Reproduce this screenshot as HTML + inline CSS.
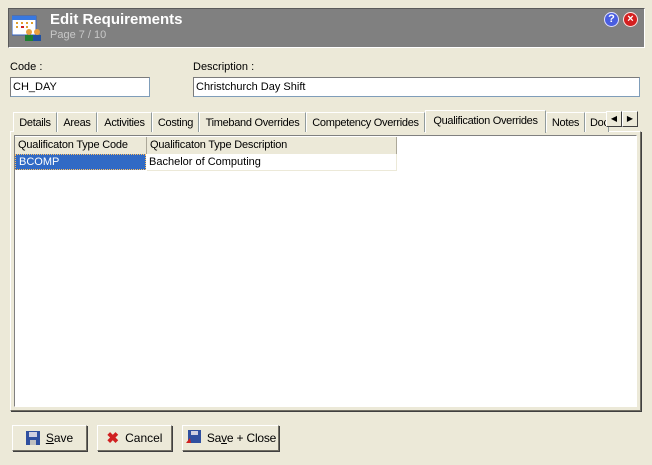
<!DOCTYPE html>
<html><head><meta charset="utf-8"><style>
*{box-sizing:border-box;margin:0;padding:0}
body{width:652px;height:465px;background:#ECE9D8;font-family:"Liberation Sans",Tahoma,sans-serif;font-size:11px;color:#000;position:relative;overflow:hidden}
.a{position:absolute}
.hdr{left:8px;top:8px;width:637px;height:40px;background:#808080;border-top:1px solid #5a5a5a;border-left:1px solid #5a5a5a;border-bottom:1px solid #fff;border-right:1px solid #fff}
.inp{background:#fff;border:1px solid #7f9db9;border-top-color:#7a7a7a;border-left-color:#7a7a7a;height:20px;padding:3px 2px;font-size:11px}
.tab{position:absolute;top:112px;height:20px;border:1px solid #fff;border-right:1px solid #919b9c;border-bottom:none;padding:4px 0 0;text-align:center;background:#ECE9D8;letter-spacing:-0.3px;white-space:nowrap;overflow:hidden}
.btn{position:absolute;top:425px;height:26px;border:1px solid #fff;border-right-color:#716f64;border-bottom-color:#716f64;box-shadow:1px 1px 0 #404040;display:flex;align-items:center;justify-content:center;gap:6px;font-size:12px}
</style></head><body>
<div class="a hdr"></div>
<svg class="a" style="left:12px;top:14px" width="30" height="28" viewBox="0 0 30 28">
<rect x="0" y="2" width="24" height="19" fill="#fff" stroke="#3060c0"/><rect x="0" y="2" width="24" height="4" fill="#3878e0"/>
<g fill="#e0a030"><rect x="4" y="8" width="2" height="2"/><rect x="9" y="8" width="2" height="2"/><rect x="14" y="8" width="2" height="2"/><rect x="19" y="8" width="2" height="2"/><rect x="4" y="12" width="2" height="2"/><rect x="14" y="12" width="2" height="2"/></g>
<rect x="9" y="12" width="3" height="2" fill="#d02020"/>
<circle cx="17" cy="18" r="3" fill="#e8a040"/><rect x="13" y="21" width="8" height="6" fill="#208030"/>
<circle cx="25" cy="18" r="3" fill="#e8a040"/><rect x="21" y="21" width="8" height="6" fill="#2050a0"/>
</svg>
<div class="a" style="left:50px;top:11px;color:#fff;font-weight:bold;font-size:15px">Edit Requirements</div>
<div class="a" style="left:50px;top:29px;color:#c8c8c8;font-size:11px">Page 7 / 10</div>
<div class="a" style="left:604px;top:12px;width:15px;height:15px;border-radius:50%;background:#4a5ee0;border:1px solid #e0e0ff;color:#fff;font-weight:bold;font-size:11px;text-align:center;line-height:13px">?</div>
<div class="a" style="left:623px;top:12px;width:15px;height:15px;border-radius:50%;background:#d42020;border:1px solid #ffe0e0;color:#fff;font-weight:bold;font-size:11px;text-align:center;line-height:13px">×</div>
<div class="a" style="left:10px;top:61px">Code :</div>
<div class="a inp" style="left:10px;top:77px;width:140px">CH_DAY</div>
<div class="a" style="left:193px;top:61px">Description :</div>
<div class="a inp" style="left:193px;top:77px;width:447px">Christchurch Day Shift</div>
<div class="a" style="left:10px;top:131px;width:631px;height:280px;border:1px solid #fff;border-right-color:#716f64;border-bottom-color:#716f64;box-shadow:1px 1px 0 #404040"></div>
<div class="tab" style="left:13px;width:44px">Details</div>
<div class="tab" style="left:57px;width:40px">Areas</div>
<div class="tab" style="left:97px;width:55px">Activities</div>
<div class="tab" style="left:152px;width:47px">Costing</div>
<div class="tab" style="left:199px;width:107px">Timeband Overrides</div>
<div class="tab" style="left:306px;width:119px">Competency Overrides</div>
<div class="tab" style="left:425px;top:110px;width:121px;height:23px;background:#ECE9D8;padding-top:4px;z-index:2;border-bottom:none">Qualification Overrides</div>
<div class="tab" style="left:546px;width:39px">Notes</div>
<div class="tab" style="left:585px;width:24px;text-align:left;padding-left:4px">Doc</div>
<div class="a" style="left:606px;top:111px;width:16px;height:16px;border:1px solid #fff;border-right-color:#404040;border-bottom-color:#404040;background:#ECE9D8;font-size:8px;text-align:center;line-height:14px">◀</div>
<div class="a" style="left:622px;top:111px;width:16px;height:16px;border:1px solid #fff;border-right-color:#404040;border-bottom-color:#404040;background:#ECE9D8;font-size:8px;text-align:center;line-height:14px">▶</div>
<div class="a" style="left:14px;top:135px;width:623px;height:272px;background:#fff;border:1px solid #808080;border-right-color:#fff;border-bottom-color:#fff"></div>
<div class="a" style="left:15px;top:137px;width:132px;height:17px;background:#ECE9D8;border-right:1px solid #aca899;padding:2px 3px;letter-spacing:-0.2px">Qualificaton Type Code</div>
<div class="a" style="left:147px;top:137px;width:250px;height:17px;background:#ECE9D8;border-right:1px solid #aca899;padding:2px 3px;letter-spacing:-0.2px">Qualificaton Type Description</div>
<div class="a" style="left:15px;top:154px;width:131px;height:16px;background:#316AC5;color:#fff;padding:1px 3px;border:1px dotted #ffc060">BCOMP</div>
<div class="a" style="left:147px;top:154px;width:250px;height:17px;padding:2px 2px;border-bottom:1px solid #ECE9D8;border-right:1px solid #ECE9D8">Bachelor of Computing</div>
<div class="btn" style="left:12px;width:75px"><svg width="14" height="14"><rect x="0" y="0" width="14" height="14" fill="#3050a0"/><rect x="3" y="1" width="8" height="5" fill="#d0d0e0"/><rect x="4" y="9" width="6" height="5" fill="#c0c0c0"/></svg><span><u>S</u>ave</span></div>
<div class="btn" style="left:97px;width:75px"><span style="color:#d02020;font-weight:bold;font-size:15px">✖</span><span>Cancel</span></div>
<div class="btn" style="left:182px;width:97px;letter-spacing:-0.2px"><svg width="16" height="16"><rect x="3" y="0" width="13" height="13" fill="#3050a0"/><rect x="6" y="1" width="7" height="4" fill="#d0d0e0"/><path d="M5 8 L1 13 L6 13 Z" fill="#d02020"/></svg><span>Sa<u>v</u>e + Close</span></div>
</body></html>
